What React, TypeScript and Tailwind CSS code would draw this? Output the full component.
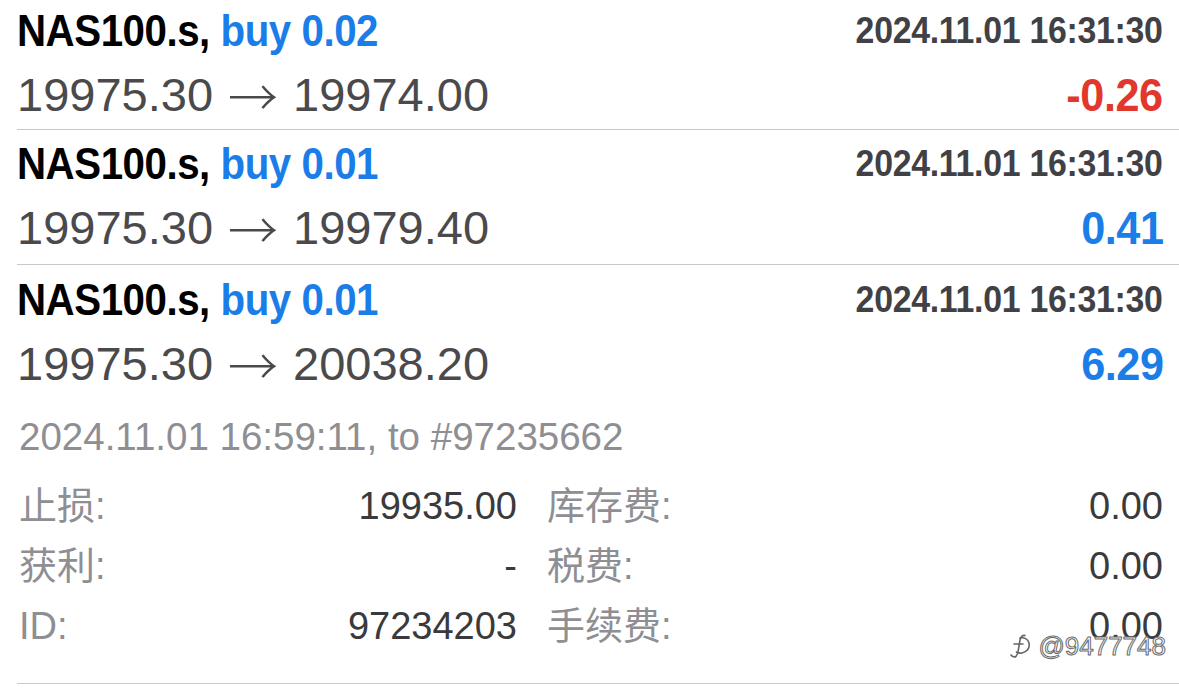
const font = "font-['Liberation_Sans','Noto_Sans_CJK_SC',sans-serif]";

type Trade = {
  volume: string;
  open: string;
  close: string;
  profit: string;
  loss?: boolean;
};

const trades: Trade[] = [
  { volume: '0.02', open: '19975.30', close: '19974.00', profit: '-0.26', loss: true },
  { volume: '0.01', open: '19975.30', close: '19979.40', profit: '0.41' },
  { volume: '0.01', open: '19975.30', close: '20038.20', profit: '6.29' },
];

function TradeHeader({ t }: { t: Trade }) {
  return (
    <>
      <div className="flex h-[56px] items-center justify-between pr-[16px]">
        <div className="origin-left scale-x-[0.915] whitespace-nowrap text-[44px] font-bold leading-none tracking-[-0.5px] text-black">
          NAS100.s, <span className="text-[#1a7de8]">buy {t.volume}</span>
        </div>
        <div className="origin-right scale-x-[0.94] whitespace-nowrap text-[36px] font-bold leading-none tracking-[-0.3px] text-[#414145]">
          2024.11.01 16:31:30
        </div>
      </div>
      <div className="mt-[7px] flex h-[56px] items-center justify-between pr-[16px]">
        <div className="flex items-center whitespace-nowrap text-[47px] leading-none text-[#4a4a4d]">
          <span>{t.open}</span>
          <span className="mx-[15px] font-['Noto_Sans_CJK_SC',sans-serif] text-[50px] font-light leading-none">→</span>
          <span>{t.close}</span>
        </div>
        <div
          className={
            t.loss
              ? 'origin-right scale-x-[0.92] text-[47px] font-bold leading-none tracking-[-0.5px] text-[#e2372c]'
              : 'origin-right scale-x-[0.92] text-[47px] font-bold leading-none tracking-[-0.5px] text-[#1a7de8]'
          }
        >
          {t.profit}
        </div>
      </div>
    </>
  );
}

function DetailRow({ l1, v1, l2, v2 }: { l1: string; v1: string; l2: string; v2: string }) {
  return (
    <div className="flex h-[60px] items-center text-[38px] leading-none">
      <div className="flex w-[500px] justify-between">
        <span className="pl-[2px] text-[#8e8e93]">{l1}</span>
        <span className="text-[#3a3a3c]">{v1}</span>
      </div>
      <div className="ml-[30px] flex flex-1 justify-between pr-[16px]">
        <span className="text-[#8e8e93]">{l2}</span>
        <span className="text-[#3a3a3c]">{v2}</span>
      </div>
    </div>
  );
}

export default function App() {
  return (
    <div className={`relative h-[688px] w-[1179px] overflow-hidden bg-white ${font}`}>
      <div className="ml-[17px] border-b border-[#c8c8cc] pt-[3px] pb-[7px]">
        <TradeHeader t={trades[0]} />
      </div>
      <div className="ml-[17px] border-b border-[#c8c8cc] pt-[6px] pb-[9px]">
        <TradeHeader t={trades[1]} />
      </div>
      <div className="ml-[17px] border-b border-[#c8c8cc] pt-[7px] pb-[27px]">
        <TradeHeader t={trades[2]} />
        <div className="mt-[26px] flex h-[40px] items-center pl-[2px] text-[38.5px] leading-none text-[#8e8e93]">
          2024.11.01 16:59:11, to #97235662
        </div>
        <div className="mt-[19px]">
          <DetailRow l1="止损:" v1="19935.00" l2="库存费:" v2="0.00" />
          <DetailRow l1="获利:" v1="-" l2="税费:" v2="0.00" />
          <DetailRow l1="ID:" v1="97234203" l2="手续费:" v2="0.00" />
        </div>
      </div>

      {/* watermark */}
      <div className="absolute top-[633px] right-[13px] flex items-center gap-[6px]">
        <svg width="24" height="26" viewBox="0 0 24 26" fill="none" stroke="#666" strokeWidth="1.6" strokeLinecap="round" strokeLinejoin="round">
          <path d="M7 24c2-1 3-4 3.5-8l1.5-9c0.5-3 2.5-5 5-4.5" />
          <path d="M6 11h9" />
          <path d="M12 5c4-1 8 1 9 5 1 5-2 9-7 10-2 0.4-4 0-5.5-1" />
          <path d="M3 22c1 1.5 2.5 2 4 2" />
        </svg>
        <span className="text-[26px] leading-none text-white [-webkit-text-stroke:1px_#6b6b6b]">@9477748</span>
      </div>
    </div>
  );
}
